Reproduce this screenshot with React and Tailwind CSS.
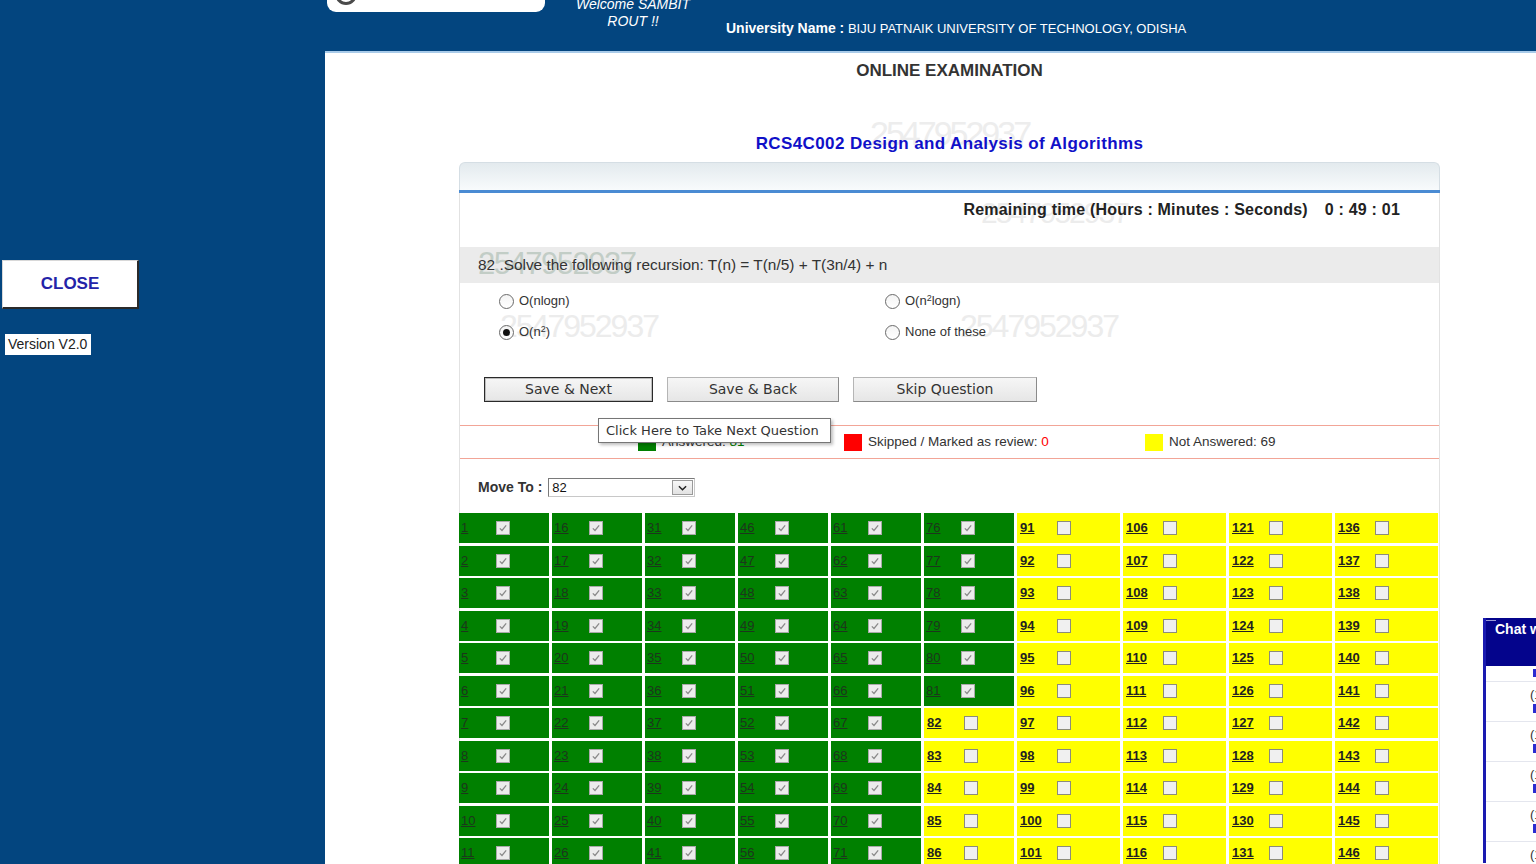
import React from "react";

const BLUE = "bg-[#03457f]";

function Box({ checked }) {
  return checked ? (
    <span className="inline-flex w-[14px] h-[14px] shrink-0 border border-[#a9a9a9] bg-[#ececec] items-center justify-center">
      <svg viewBox="0 0 12 12" className="w-[10px] h-[10px]">
        <path d="M2.2 6.4 L4.8 9 L9.8 2.8" fill="none" stroke="#8a8a8a" strokeWidth="1.5" />
      </svg>
    </span>
  ) : (
    <span className="inline-block w-[14px] h-[14px] shrink-0 border border-[#8c8c7a] bg-[#f0f0f0]" />
  );
}

function Radio({ checked }) {
  return (
    <span className="inline-flex w-[15px] h-[15px] shrink-0 rounded-full border border-[#6a6a6a] bg-gradient-to-b from-[#f4f4f4] to-white items-center justify-center">
      {checked && <span className="w-[7px] h-[7px] rounded-full bg-[#111]" />}
    </span>
  );
}

function Btn({ children, w, focused }) {
  return (
    <button
      className={
        "h-[25px] text-[14px] text-[#333] font-['DejaVu_Sans',Verdana,sans-serif] bg-gradient-to-b from-[#f6f6f6] to-[#e6e6e6] " +
        (focused
          ? "border border-[#2a2a2a] shadow-[inset_0_0_0_1px_#bdbdbd]"
          : "border border-[#b5b5b5] border-r-[#8a8a8a] border-b-[#8a8a8a]")
      }
      style={{ width: w }}
    >
      {children}
    </button>
  );
}

const WM = "2547952937";

export default function App() {
  const cells = [];
  for (let n = 1; n <= 150; n++) cells.push(n);

  return (
    <div className="min-h-screen flex bg-white font-['Liberation_Sans',Arial,sans-serif] text-[#333] overflow-hidden">
      {/* Sidebar */}
      <aside className={"w-[325px] shrink-0 " + BLUE + " pt-[260px] pl-[2px]"}>
        <button className="w-[137px] h-[49px] bg-white border border-[#d8d8d8] border-r-2 border-b-2 border-r-[#2a2a2a] border-b-[#2a2a2a] text-[17px] font-bold text-[#2323a8]">
          CLOSE
        </button>
        <div className="mt-[25px] ml-[3px] w-[86px] h-[21px] bg-white text-[14px] leading-[21px] text-[#222] pl-[3px]">
          Version V2.0
        </div>
      </aside>

      <div className="flex-1 min-w-0">
        {/* Header */}
        <header className={"h-[53px] " + BLUE + " border-b-2 border-[#a9cbe9] flex items-start overflow-hidden"}>
          <div className="ml-[2px] w-[218px] h-[12px] bg-white rounded-b-[9px] relative overflow-hidden shrink-0">
            <div className="absolute left-[8px] -top-[17px] w-[22px] h-[22px] rounded-full border-[3px] border-[#4a4a4a]" />
          </div>
          <div className="ml-[15px] w-[146px] -mt-[4px] text-center italic text-white text-[14px] leading-[17px] shrink-0">
            <div>Welcome SAMBIT</div>
            <div>ROUT !!</div>
          </div>
          <div className="ml-[20px] mt-[20px] text-white leading-[16px] whitespace-nowrap">
            <span className="text-[14px] font-bold">University Name :</span>
            <span className="text-[13px]"> BIJU PATNAIK UNIVERSITY OF TECHNOLOGY, ODISHA</span>
          </div>
        </header>

        {/* Main */}
        <main className="pl-[134px]">
          <div className="w-[981px]">
            <div className="mt-[8px] text-center text-[17px] leading-[20px] font-bold text-[#333]">
              ONLINE EXAMINATION
            </div>
            <div className="relative mt-[51px] h-[20px] text-center">
              <span className="absolute left-[411px] -top-[16px] text-[34px] leading-[34px] text-[#ededed] tracking-[-3px] select-none">
                {WM}
              </span>
              <span className="relative text-[17px] leading-[20px] font-bold text-[#1010c8] tracking-[0.4px]">
                RCS4C002 Design and Analysis of Algorithms
              </span>
            </div>

            {/* Panel */}
            <div className="mt-[10px]">
              <div className="h-[28px] rounded-t-[6px] border border-b-0 border-[#d5dee4] bg-gradient-to-b from-[#e3eaee] to-[#f8fbfc]" />
              <div className="h-[3px] bg-[#4a8bd3]" />
              <div className="border-x border-[#e2e2e2]">
                {/* Timer */}
                <div className="relative h-[54px] pt-[8px] pr-[39px] text-right text-[16px] leading-[18px] font-bold text-[#222]">
                  <span className="absolute left-[521px] top-[5px] text-[30px] leading-[30px] text-[#ececec] font-normal tracking-[-2px] select-none">
                    {WM}
                  </span>
                  <span className="relative tracking-[0.2px]">
                    Remaining time (Hours : Minutes : Seconds)
                    <span className="ml-[17px]">0 : 49 : 01</span>
                  </span>
                </div>

                {/* Question */}
                <div className="relative h-[36px] bg-[#ebebeb] flex items-center pl-[18px] text-[15.4px] text-[#333]">
                  <span className="absolute left-[18px] top-[2px] text-[31px] leading-[30px] text-[#c2cdc6] tracking-[-1.5px] select-none">
                    {WM}
                  </span>
                  <span className="relative">82 .Solve the following recursion: T(n) = T(n/5) + T(3n/4) + n</span>
                </div>

                {/* Options */}
                <div className="relative h-[67px] pt-[9px] pl-[39px] text-[13px] text-[#333]">
                  <span className="absolute left-[40px] top-[27px] text-[32px] leading-[32px] text-[#ececec] tracking-[-2px] select-none">
                    {WM}
                  </span>
                  <span className="absolute left-[500px] top-[27px] text-[32px] leading-[32px] text-[#ececec] tracking-[-2px] select-none">
                    {WM}
                  </span>
                  <div className="relative grid grid-cols-[386px_1fr] gap-y-[15px]">
                    <label className="flex items-center gap-[5px] h-[16px] mt-[1px]">
                      <Radio />
                      <span>O(nlogn)</span>
                    </label>
                    <label className="flex items-center gap-[5px] h-[16px] mt-[1px]">
                      <Radio />
                      <span>
                        O(n<sup className="text-[9px]">2</sup>logn)
                      </span>
                    </label>
                    <label className="flex items-center gap-[5px] h-[16px]">
                      <Radio checked />
                      <span>
                        O(n<sup className="text-[9px]">2</sup>)
                      </span>
                    </label>
                    <label className="flex items-center gap-[5px] h-[16px]">
                      <Radio />
                      <span>None of these</span>
                    </label>
                  </div>
                </div>

                {/* Buttons */}
                <div className="mt-[27px] pl-[24px] flex gap-[14px]">
                  <Btn w={169} focused>Save &amp; Next</Btn>
                  <Btn w={172}>Save &amp; Back</Btn>
                  <Btn w={184}>Skip Question</Btn>
                </div>

                {/* Legend */}
                <div className="relative mt-[23px] h-[34px] border-y border-[#f2a597] flex items-center pl-[178px] pt-[1px] text-[13.5px] text-[#333]">
                  <div className="w-[206px] flex items-center gap-[6px]">
                    <span className="w-[18px] h-[17px] bg-[#008000]" />
                    <span>
                      Answered: <span className="text-[#008000]">81</span>
                    </span>
                  </div>
                  <div className="w-[301px] flex items-center gap-[6px]">
                    <span className="w-[18px] h-[17px] bg-[#ff0000]" />
                    <span>
                      Skipped / Marked as review: <span className="text-[#ff0000]">0</span>
                    </span>
                  </div>
                  <div className="flex items-center gap-[6px]">
                    <span className="w-[18px] h-[17px] bg-[#ffff00]" />
                    <span>Not Answered: 69</span>
                  </div>
                  <div className="absolute left-[138px] -top-[8px] w-[233px] h-[25px] bg-white border border-[#767676] shadow-[2px_2px_3px_rgba(0,0,0,0.25)] flex items-center pl-[7px] text-[13px] text-[#333] font-['DejaVu_Sans',Verdana,sans-serif] whitespace-nowrap">
                    Click Here to Take Next Question
                  </div>
                </div>

                {/* Move To */}
                <div className="mt-[19px] pl-[18px] flex items-center gap-[6px] h-[19px]">
                  <span className="text-[14px] font-bold text-[#333]">Move To :</span>
                  <div className="w-[147px] h-[19px] border border-[#7a7a7a] border-r-[#c8c8c8] border-b-[#c8c8c8] bg-white flex items-center justify-between">
                    <span className="pl-[3px] text-[13px] text-[#111]">82</span>
                    <span className="w-[21px] h-[15px] mr-[1px] border border-[#9a9a9a] bg-gradient-to-b from-[#f8f8f8] to-[#e2e2e2] flex items-center justify-center">
                      <svg viewBox="0 0 10 6" className="w-[9px] h-[6px]">
                        <path d="M1 1 L5 5 L9 1" fill="none" stroke="#222" strokeWidth="1.6" />
                      </svg>
                    </span>
                  </div>
                </div>

                {/* Grid */}
                <div className="mt-[16px] -ml-[1px] grid grid-flow-col grid-rows-[repeat(15,30px)] grid-cols-[repeat(6,90px)_repeat(4,103px)] gap-x-[3px] gap-y-[2.5px]">
                  {cells.map((n) => {
                    const ans = n <= 81;
                    return (
                      <div
                        key={n}
                        className={"h-[30px] flex items-center " + (ans ? "bg-[#008000] pl-[2px]" : "bg-[#ffff00] pl-[3px]")}
                      >
                        <a
                          className={
                            "underline text-[13px] " +
                            (ans ? "min-w-[35px] text-[#1c361c]" : "min-w-[37px] font-bold text-[#222]")
                          }
                        >
                          {n}
                        </a>
                        <Box checked={ans} />
                      </div>
                    );
                  })}
                </div>
                <div className="h-[20px]" />
              </div>
            </div>
          </div>
        </main>
      </div>

      {/* Chat widget */}
      <div className="fixed left-[1483px] top-[618px] w-[53px] h-[246px] overflow-hidden">
        <div className="relative w-[240px] h-full border-l-[3px] border-[#1a1ab0] bg-white">
          <div className="absolute left-0 top-[3px] w-[10px] h-[1px] bg-[#9a9ad8]" />
          <div className="h-[49px] bg-[#04048c] pl-[9px] -mt-[1px]">
            <span className="text-white font-bold text-[14px] leading-[16px]">Chat with Invigilator</span>
          </div>
          <div className="h-[16px] border-b border-[#e4e6ee] pl-[47px] pt-[3px]">
            <span className="block w-[10px] h-[8px] bg-[#2b2bd0]" />
          </div>
          {[0, 1, 2, 3, 4].map((i) => (
            <div key={i} className="h-[40px] border-b border-[#e4e6ee] pl-[44px] pt-[6px] text-[13px] leading-[14px]">
              <div className="text-[#333]">(10:1{i} AM)</div>
              <div className="mt-[2px] ml-[3px] w-[12px] h-[9px] bg-[#2b2bd0]" />
            </div>
          ))}
        </div>
      </div>
    </div>
  );
}
